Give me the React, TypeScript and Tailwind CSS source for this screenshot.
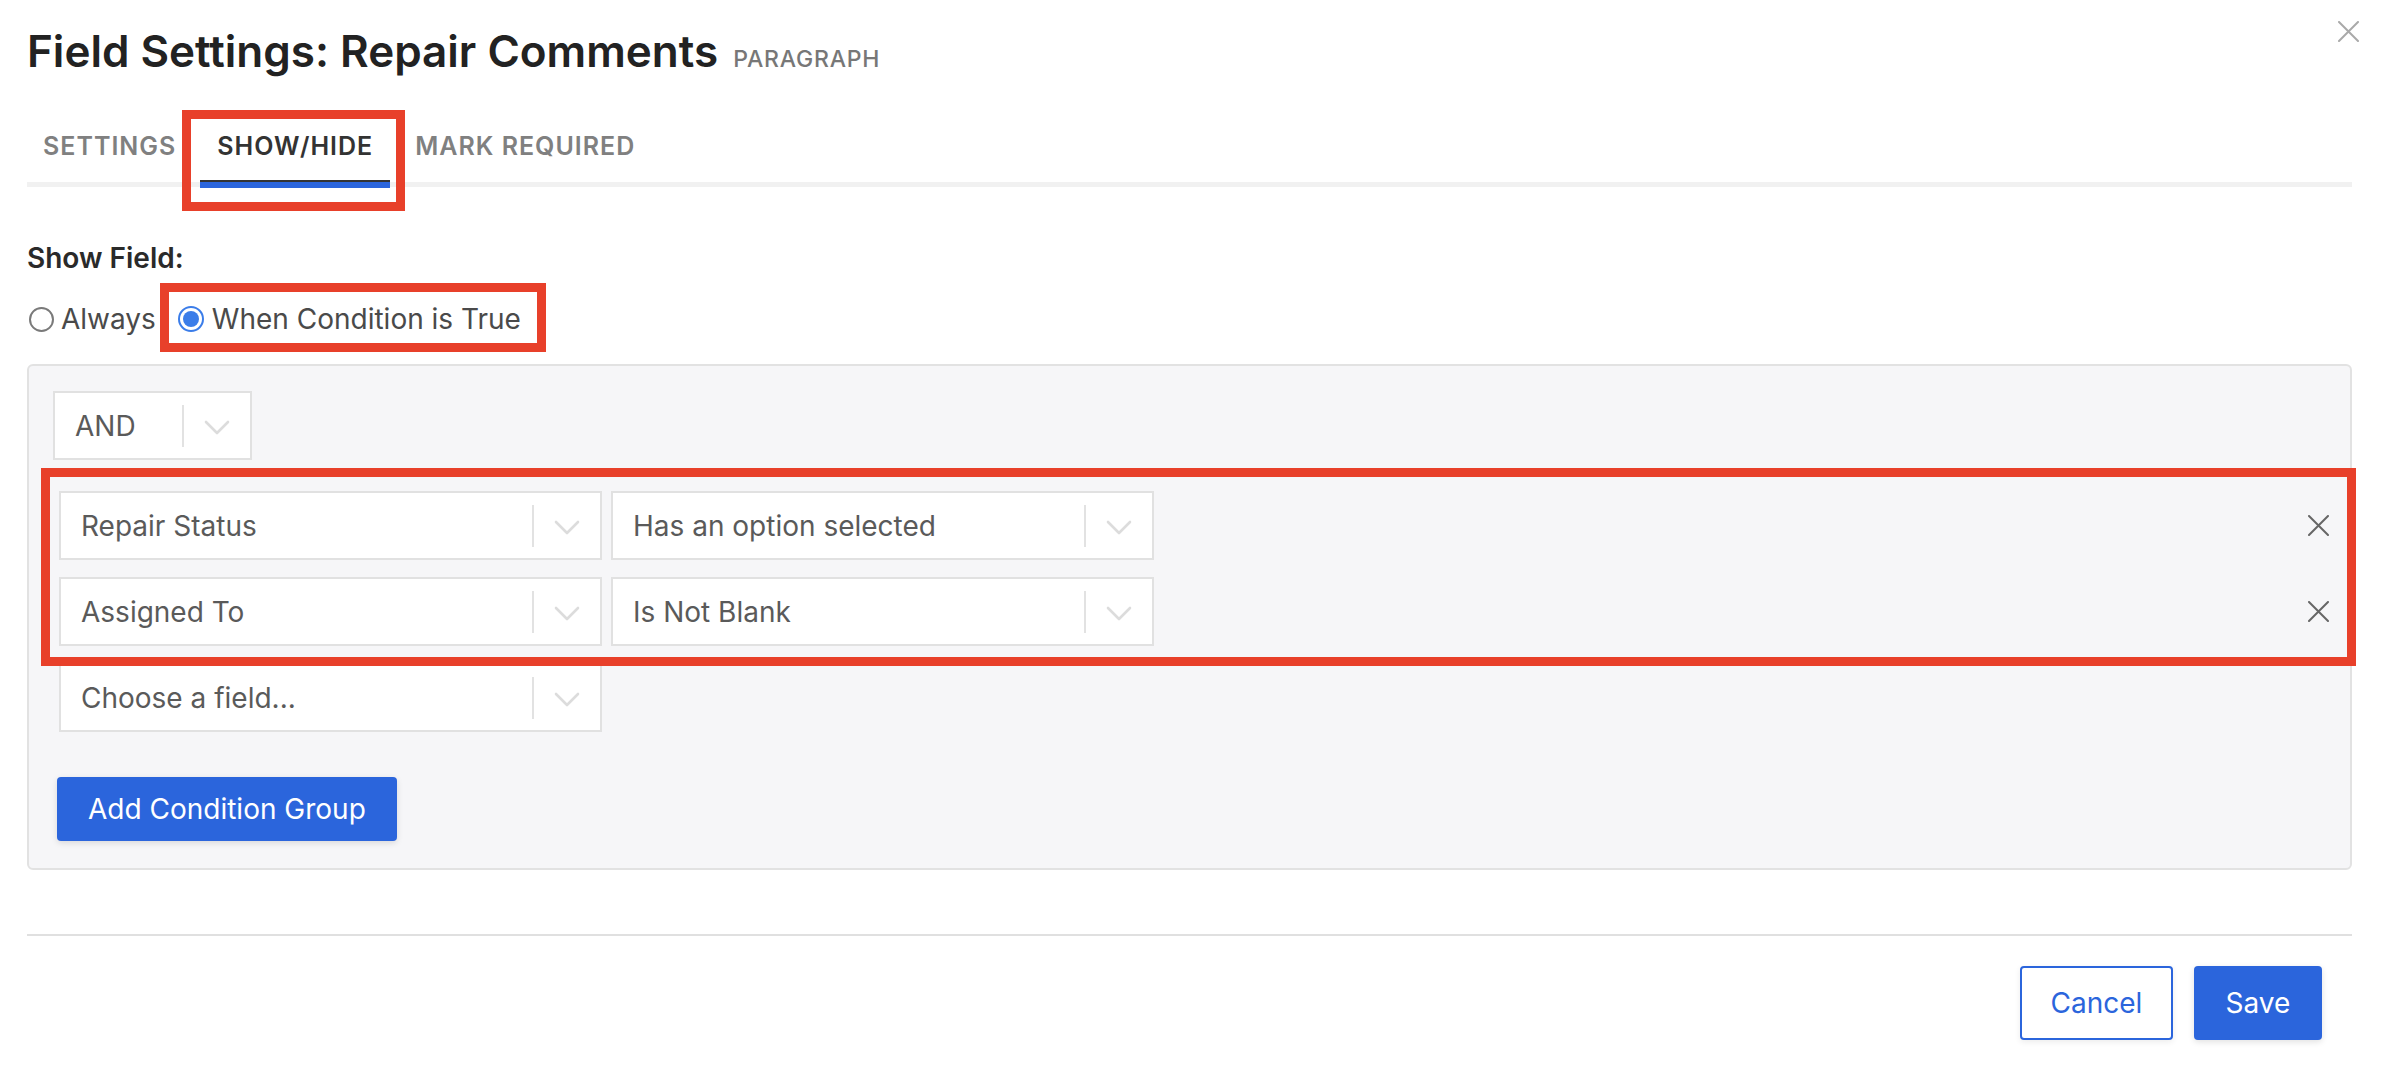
import React from "react";

const RED = "border-[#e8402a]";

function Chevron() {
  return (
    <svg width="26" height="15" viewBox="0 0 26 15" fill="none" className="shrink-0">
      <polyline points="2,2 13,13 24,2" stroke="#dcdcdc" strokeWidth="2.6" strokeLinecap="round" strokeLinejoin="round" />
    </svg>
  );
}

function CloseIcon({ color, size }: { color: string; size: number }) {
  return (
    <svg width={size} height={size} viewBox="0 0 21 21" fill="none">
      <path d="M1 1 L20 20 M20 1 L1 20" stroke={color} strokeWidth="2" strokeLinecap="round" />
    </svg>
  );
}

function Select({ label, width }: { label: string; width: string }) {
  return (
    <div className={`${width} h-[69px] shrink-0 bg-white border-2 border-[#e1e1e1] flex items-center`}>
      <span className="flex-1 pl-[20px] text-[28px] text-[#5a5a5a] whitespace-nowrap">{label}</span>
      <div className="w-[2px] h-[42px] bg-[#e2e2e2]" />
      <div className="w-[66px] flex items-center justify-center pt-[3px]">
        <Chevron />
      </div>
    </div>
  );
}

function Radio({ checked }: { checked: boolean }) {
  if (checked) {
    return (
      <span className="w-[26px] h-[26px] rounded-full border-2 border-[#3b7de9] flex items-center justify-center bg-white shrink-0">
        <span className="w-[16px] h-[16px] rounded-full bg-[#3b7de9]" />
      </span>
    );
  }
  return <span className="w-[25px] h-[25px] rounded-full border-2 border-[#7a7a7a] bg-white shrink-0" />;
}

function ConditionRow({ field, op }: { field: string; op: string }) {
  return (
    <div className="flex items-center gap-[9px]">
      <Select label={field} width="w-[543px]" />
      <Select label={op} width="w-[543px]" />
      <div className="flex-1" />
      <div className="pr-[21px]">
        <CloseIcon color="#666666" size={21} />
      </div>
    </div>
  );
}

export default function App() {
  return (
    <div
      className="w-[2382px] h-[1076px] bg-white relative overflow-hidden text-[#333]"
      style={{ fontFamily: "Inter, 'Noto Sans', sans-serif" }}
    >
      <button className="absolute right-[23px] top-[21px]">
        <CloseIcon color="#a9a9a9" size={21} />
      </button>

      <div className="pl-[27px] pr-[30px] pt-[25px]">
        {/* Header */}
        <div className="flex items-baseline gap-[15px]">
          <h1 className="text-[44px] leading-[52px] font-semibold text-[#222]">
            Field Settings: Repair Comments
          </h1>
          <span className="text-[23px] font-medium text-[#777] tracking-[0.8px]">PARAGRAPH</span>
        </div>

        {/* Tabs */}
        <div className="mt-[33px] flex gap-[8px] border-b-[5px] border-[#f1f1f1]">
          <div className="px-[16px] pt-[24px] pb-[24px] text-[25px] leading-[24px] font-semibold tracking-[1px] text-[#808080]">
            SETTINGS
          </div>
          <div className="relative px-[17px] pt-[24px] pb-[24px] text-[25px] leading-[24px] font-semibold tracking-[1px] text-[#333]">
            SHOW/HIDE
            <div className="absolute left-0 right-0 bottom-[-6px] h-[8px] border-t-2 border-[#333] bg-[#2b65dc]" />
            <div className={`absolute left-[-18px] right-[-15px] top-0 bottom-[-29px] border-[9px] ${RED}`} />
          </div>
          <div className="px-[17px] pt-[24px] pb-[24px] text-[25px] leading-[24px] font-semibold tracking-[1px] text-[#808080]">
            MARK REQUIRED
          </div>
        </div>

        {/* Show field */}
        <div className="mt-[55px] text-[28px] leading-[32px] font-semibold text-[#2a2a2a]">Show Field:</div>
        <div className="mt-[29px] flex items-center text-[28px] leading-[32px] text-[#4a4a4a]">
          <label className="flex items-center gap-[7px] pl-[2px]">
            <Radio checked={false} />
            <span>Always</span>
          </label>
          <label className="relative ml-[22px] flex items-center gap-[8px]">
            <Radio checked />
            <span>When Condition is True</span>
            <div className={`absolute left-[-18px] right-[-25px] top-[-20px] bottom-[-17px] border-[9px] ${RED}`} />
          </label>
        </div>

        {/* Conditions */}
        <div className="mt-[29px] bg-[#f6f6f8] border-2 border-[#e2e2e2] rounded-[6px] pl-[24px] pt-[25px] pb-[27px]">
          <Select label="AND" width="w-[199px]" />
          <div className="relative mt-[31px] pl-[6px] flex flex-col gap-[17px]">
            <ConditionRow field="Repair Status" op="Has an option selected" />
            <ConditionRow field="Assigned To" op="Is Not Blank" />
            <div className={`absolute left-[-12px] right-[-6px] top-[-23px] bottom-[-20px] border-[9px] ${RED}`} />
          </div>
          <div className="mt-[17px] pl-[6px]">
            <Select label="Choose a field..." width="w-[543px]" />
          </div>
          <button className="mt-[45px] ml-[4px] h-[64px] px-[31px] bg-[#2b65dc] text-white text-[28px] rounded-[4px] shadow-[0_2px_6px_rgba(0,0,0,0.12)]">
            Add Condition Group
          </button>
        </div>

        {/* Footer */}
        <div className="mt-[64px] h-[2px] bg-[#e0e0e0]" />
        <div className="mt-[30px] flex justify-end gap-[21px] pr-[30px]">
          <button className="w-[153px] h-[74px] border-2 border-[#2b65dc] rounded-[4px] text-[28px] text-[#2b65dc] bg-white shadow-[0_2px_6px_rgba(0,0,0,0.08)]">
            Cancel
          </button>
          <button className="w-[128px] h-[74px] rounded-[4px] text-[28px] text-white bg-[#2b65dc] shadow-[0_2px_6px_rgba(0,0,0,0.12)]">
            Save
          </button>
        </div>
      </div>
    </div>
  );
}
